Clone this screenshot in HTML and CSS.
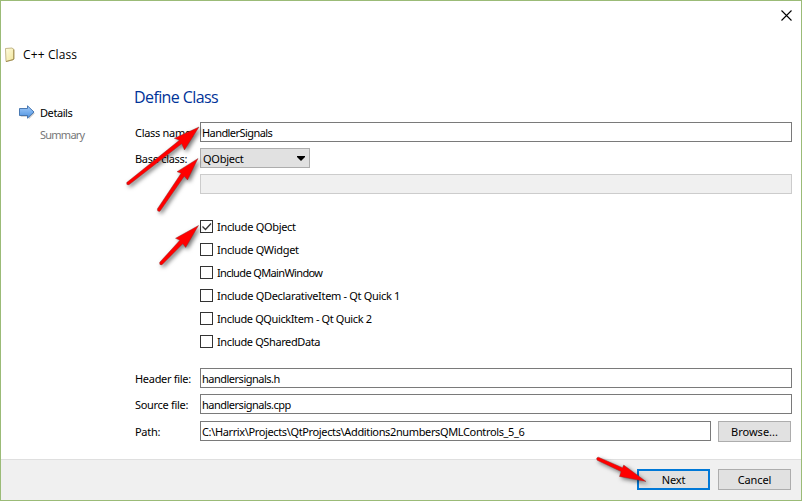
FILE: index.html
```html
<!DOCTYPE html>
<html lang="en">
<head>
<meta charset="utf-8">
<title>C++ Class</title>
<link rel="stylesheet" href="styles.css">
</head>
<body>
<div class="window">
  <header class="titlebar">
    <svg class="close" width="11" height="11" viewBox="0 0 11 11"><path d="M.5.5l10 10M10.500.5l-10 10" stroke="#000" stroke-width="1.1"/></svg>
  </header>
  <div class="wizard-title">
    <svg width="10" height="16" viewBox="0 0 10 16">
      <defs><linearGradient id="paper" x2="1" y2="1"><stop stop-color="#fffde0"/><stop offset="1" stop-color="#f0e49a"/></linearGradient></defs>
      <path d="M.5 1.500L7 1 9 2.500V12L7.800 13 1 14.500z" fill="url(#paper)" stroke="#b5a671" stroke-width=".8"/>
      <path d="M8.700 2.500v9.800L1 14.600" fill="none" stroke="#988446" stroke-width=".8"/>
    </svg>
    <span>C++ Class</span>
  </div>
  <div class="content">
    <nav class="steps">
      <div class="step">
        <svg width="18" height="15" viewBox="0 0 18 15">
          <defs><linearGradient id="blue" x2="0" y2="1"><stop stop-color="#a3ccfa"/><stop offset="1" stop-color="#4c91e0"/></linearGradient></defs>
          <path d="M1 5h8V1.500l6 6-6 6V11H1z" fill="#777" opacity=".4" transform="translate(.8 .8)"/>
          <path d="M.5 3.500h8V.8l6.500 6.200-6.500 6.200V10.500h-8z" fill="url(#blue)" stroke="#3d6eaa" stroke-width=".9"/>
        </svg>
        <span>Details</span>
      </div>
      <div class="step pending"><span>Summary</span></div>
    </nav>
    <main class="form">
      <h1>Define Class</h1>
      <div class="row"><label>Class name:</label><div class="field"><span class="w-handler">HandlerSignals</span></div></div>
      <div class="row base"><label>Base class:</label><div class="select"><span>QObject</span><svg width="8" height="5" viewBox="0 0 8 5"><path d="M0 0h8v1L4 5 0 1z"/></svg></div></div>
      <div class="row custom"><div class="field disabled"></div></div>
      <div class="checks">
        <div class="check"><i><svg width="11" height="11" viewBox="0 0 11 11"><path d="M1.500 5.500l3 3 5.500-6" fill="none" stroke="#333" stroke-width="1.3"/></svg></i><span>Include QObject</span></div>
        <div class="check"><i></i><span>Include QWidget</span></div>
        <div class="check"><i></i><span class="w-main">Include QMainWindow</span></div>
        <div class="check"><i></i><span>Include QDeclarativeItem - Qt Quick 1</span></div>
        <div class="check"><i></i><span class="w-quick">Include QQuickItem - Qt Quick 2</span></div>
        <div class="check"><i></i><span class="w-quick">Include QSharedData</span></div>
      </div>
      <div class="row"><label>Header file:</label><div class="field"><span class="w-file">handlersignals.h</span></div></div>
      <div class="row source"><label>Source file:</label><div class="field"><span class="w-file">handlersignals.cpp</span></div></div>
      <div class="row path"><label>Path:</label><div class="field"><span class="w-path">C:\Harrix\Projects\QtProjects\Additions2numbersQMLControls_5_6</span></div><div class="button"><span>Browse...</span></div></div>
    </main>
  </div>
  <footer class="footer">
    <div class="button primary"><span>Next</span></div>
    <div class="button"><span>Cancel</span></div>
  </footer>
  <svg class="arrows" width="802" height="501" viewBox="0 0 802 501">
    <g fill="red" stroke="#7c3030" stroke-width=".4">
      <path d="M199 127L184.500 150 181.700 143.800 129 184.800Q126 185.500 126.700 182.500L179.300 140.300 174.300 138.300z"/>
      <path d="M198 158.500L187.500 180 184.300 176.300 160 211.300Q157 212 157.300 209L181.100 173.300 177 171.700z"/>
      <path d="M198.500 225.500L185.700 247.500 182.800 243.800 162 264.800Q159 265.500 159.700 262.300L179.800 240.300 175.500 238.300z"/>
      <path d="M646 481.500L619.500 476.500 621 471.500 597.200 460.300Q595.500 457.500 598.500 457.200L622.500 467.700 623.700 465z"/>
    </g>
  </svg>
</div>
</body>
</html>
```
FILE: styles.css
```css
* { box-sizing: border-box; }
body { margin: 0; background: #fff; }
.window {
  position: relative;
  display: flex;
  flex-direction: column;
  width: 802px;
  height: 501px;
  overflow: hidden;
  border: 1px solid #9bbb77;
  background: #fff;
  color: #000;
  font: 11px/14px "Noto Sans", sans-serif;
  white-space: nowrap;
}
span, label { display: block; }
svg { display: block; flex: none; }
.titlebar { display: flex; justify-content: flex-end; height: 45px; padding: 9px 9px 0 0; }
.wizard-title { display: flex; gap: 8px; height: 41px; padding-left: 4px; padding-top: 1px; font: 12px/16px "Open Sans", sans-serif; letter-spacing: .12px; }
.content { display: flex; height: 372px; }
.steps { width: 133px; padding: 18px 0 0 18px; }
.step { display: flex; gap: 3px; height: 22px; letter-spacing: -.42px; line-height: 16px; }
.step.pending { padding-left: 21px; color: #777; letter-spacing: -.75px; }
.form { width: 658px; }
h1 { margin: 0; height: 35px; color: #003399; font: 16px/21px "Open Sans", sans-serif; letter-spacing: -.6px; }
.row { display: flex; height: 20px; padding-left: 1px; }
.row label { width: 65px; line-height: 22px; letter-spacing: -.3px; }
.field { flex: 1; height: 20px; border: 1px solid #7a7a7a; padding: 0 0 0 1px; line-height: 20px; background: #fff; }
.base { margin-top: 6px; }
.select { display: flex; justify-content: space-between; align-items: center; width: 110px; padding: 2px 4px 0 2px; border: 1px solid #adadad; background: #e1e1e1; letter-spacing: -.25px; }
.select svg { margin-top: -2px; }
.custom { margin-top: 6px; padding-left: 66px; }
.disabled { border-color: #ccc; background: #f0f0f0; }
.checks { height: 148px; margin-top: 26px; padding-left: 66px; }
.check { display: flex; align-items: center; gap: 4px; height: 13px; margin-bottom: 10px; letter-spacing: -.32px; }
.check i { width: 13px; height: 13px; border: 1px solid #333; }
.w-main { letter-spacing: -.63px; }
.w-quick { letter-spacing: -.39px; }
.w-handler { letter-spacing: -.57px; }
.w-file { letter-spacing: -.5px; }
.w-path { letter-spacing: -.365px; }
.source { margin-top: 6px; }
.path { margin-top: 7px; }
.path .field { flex: none; width: 511px; }
.button { display: flex; align-items: center; justify-content: center; width: 73px; height: 21px; border: 1px solid #adadad; background: #e1e1e1; padding-top: 1px; }
.path .button { margin-left: 7px; }
.footer { display: flex; justify-content: flex-end; gap: 8px; height: 41px; padding: 9px 10px 0 0; border-top: 1px solid #dfdfdf; background: #f0f0f0; }
.footer .button { letter-spacing: -.1px; }
.primary { border: 2px solid #0078d7; }
.arrows { position: absolute; left: -1px; top: -1px; filter: drop-shadow(2px 2px 2px rgba(0,0,0,.55)); }
```
